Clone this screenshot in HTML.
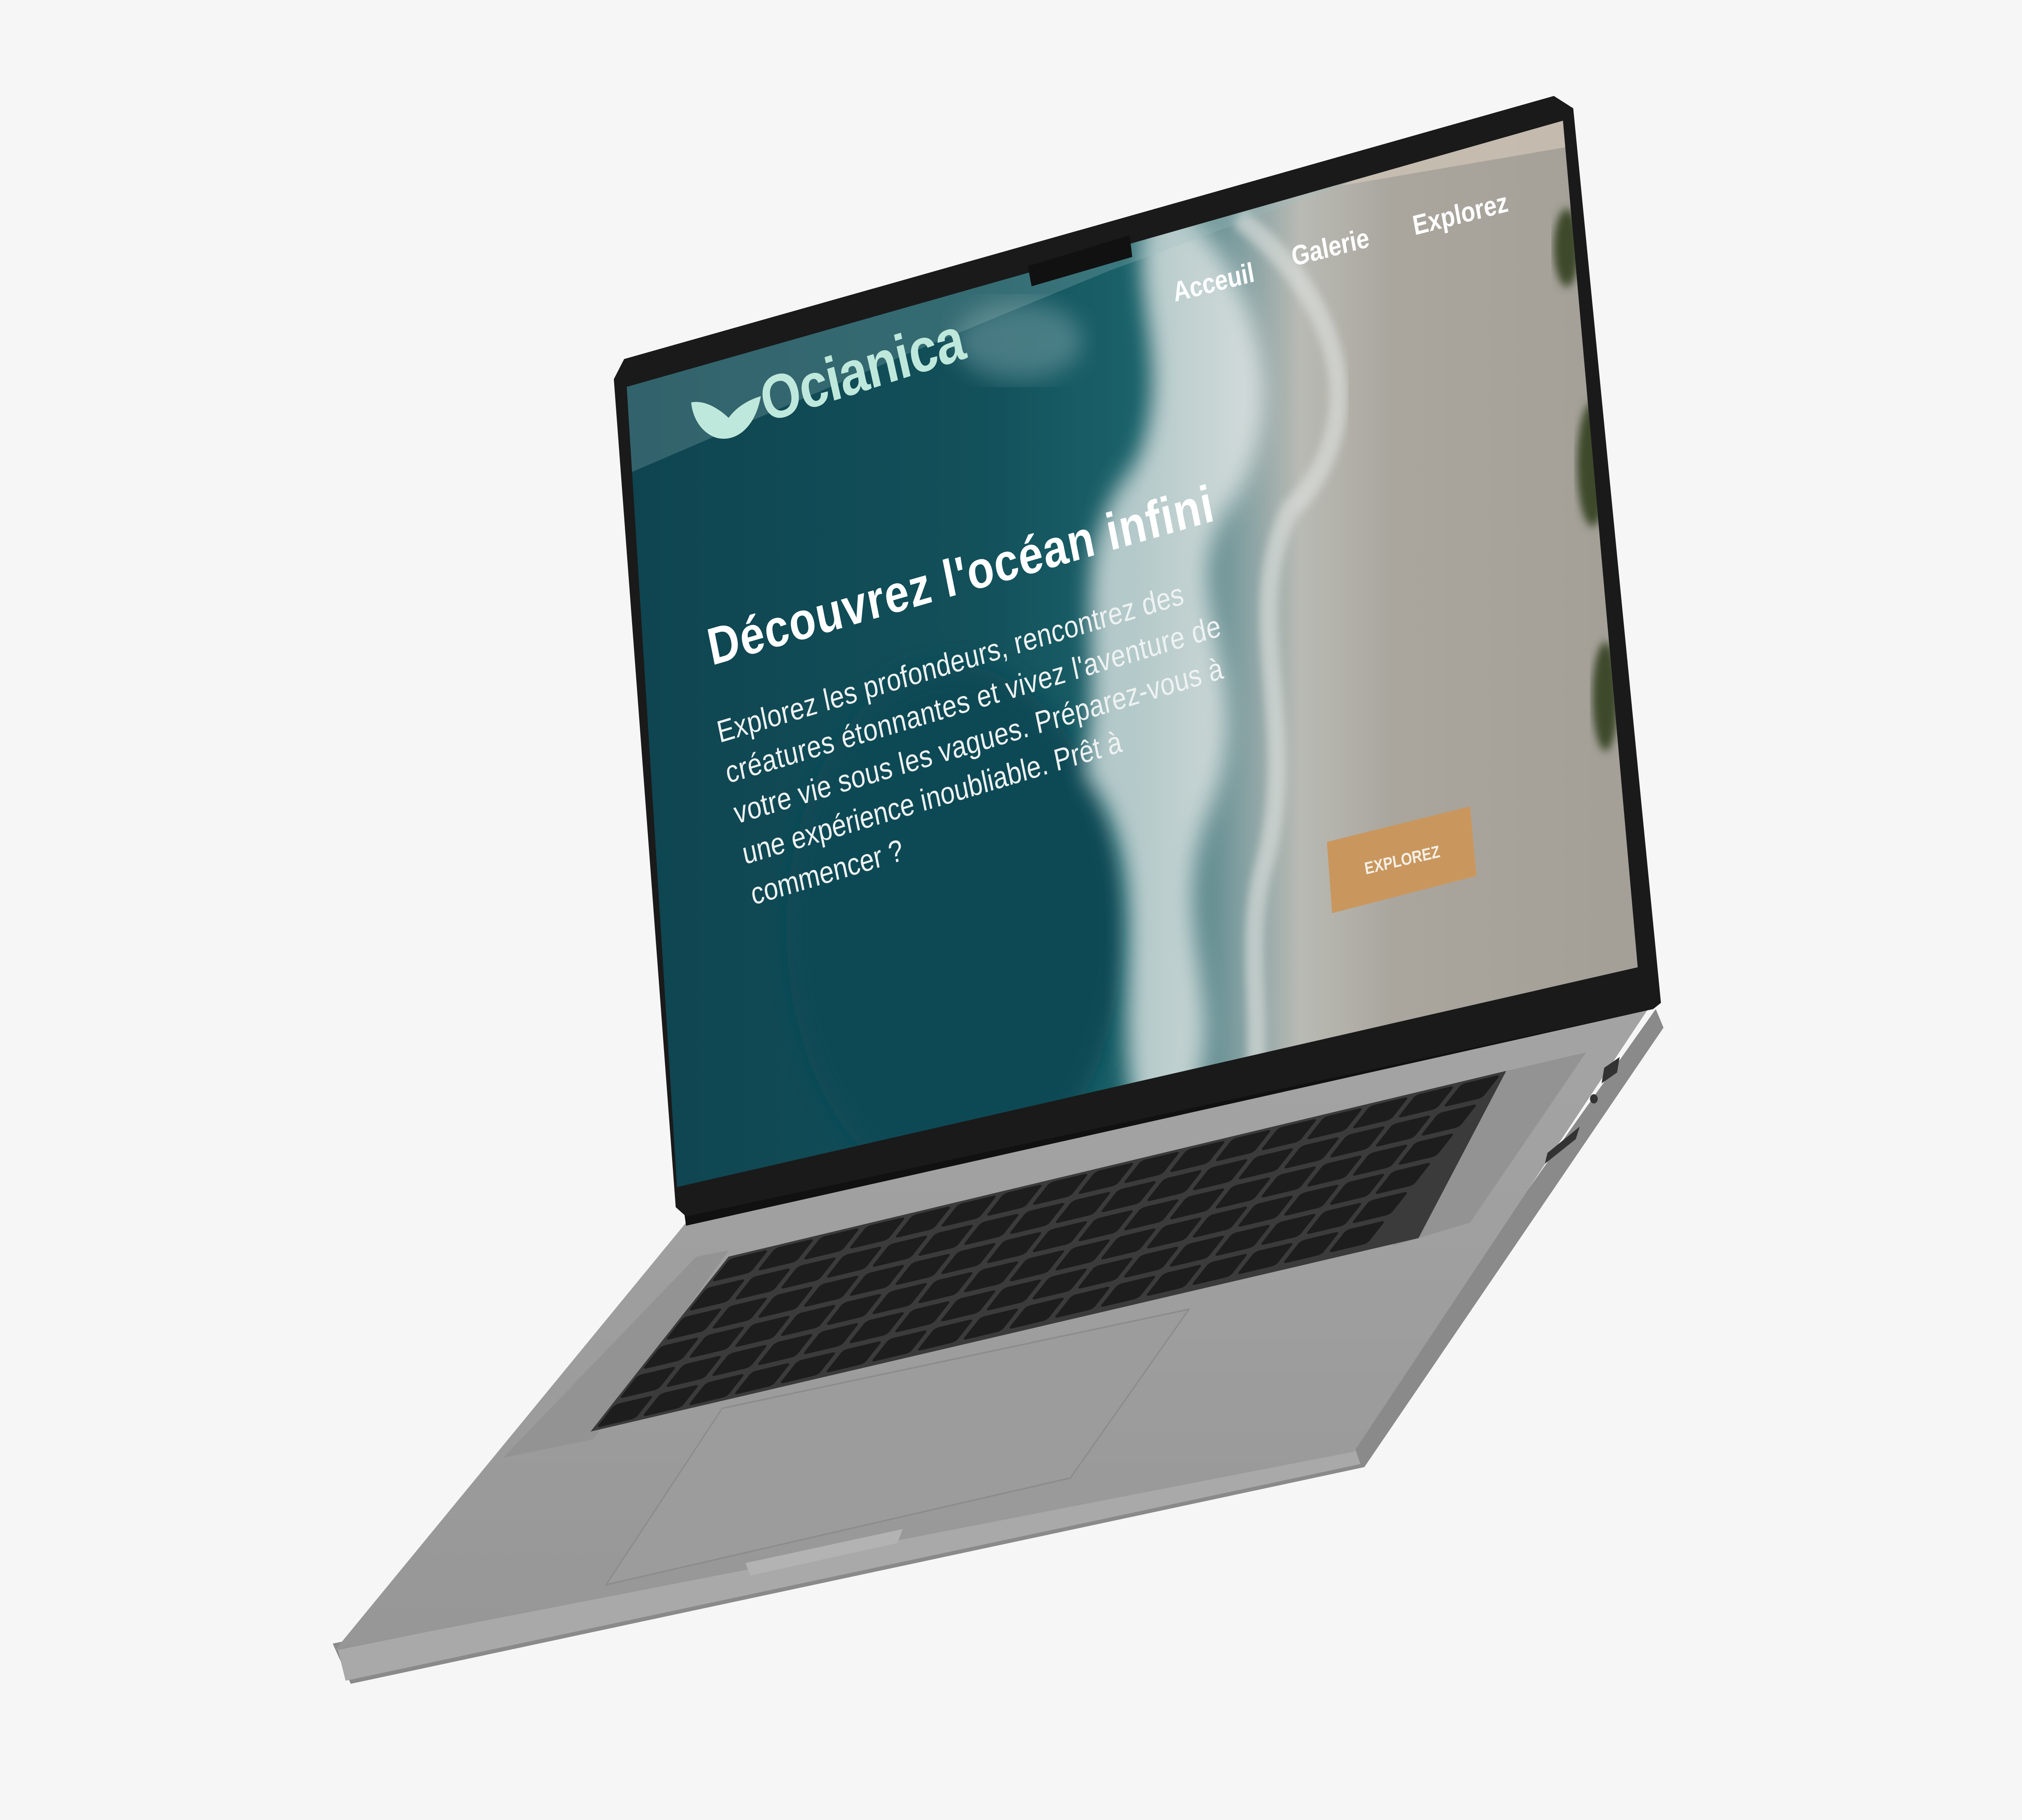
<!DOCTYPE html>
<html><head><meta charset="utf-8"><style>
html,body{margin:0;padding:0;background:#f6f6f6;width:100%;height:100%;overflow:hidden;}
svg{position:fixed;left:0;top:0;width:100vw;height:100vh;display:block}
</style></head><body>
<svg viewBox="0 0 1568 1176" preserveAspectRatio="none" xmlns="http://www.w3.org/2000/svg" font-family="Liberation Sans, sans-serif">
<defs>
<linearGradient id="scr" x1="480" y1="0" x2="1280" y2="0" gradientUnits="userSpaceOnUse">
<stop offset="0" stop-color="#0e4450"/>
<stop offset="0.35" stop-color="#12505a"/>
<stop offset="0.5" stop-color="#1b626a"/>
<stop offset="0.6" stop-color="#7f9ea0"/>
<stop offset="0.66" stop-color="#b9bab4"/>
<stop offset="0.75" stop-color="#aaa69e"/>
<stop offset="1" stop-color="#a39f97"/>
</linearGradient>
<clipPath id="disp"><polygon points="486,250 1212,78 1270,625 525,767"/></clipPath>
<filter id="b8"><feGaussianBlur stdDeviation="8"/></filter>
<filter id="b3"><feGaussianBlur stdDeviation="3"/></filter>
<pattern id="keys" width="1" height="1" patternUnits="userSpaceOnUse">
<rect width="1" height="1" fill="#3b3b3b"/>
<rect x="0.07" y="0.1" width="0.86" height="0.8" rx="0.1" fill="#1d1d1d"/>
</pattern>
<linearGradient id="deck" x1="0" y1="700" x2="0" y2="1080" gradientUnits="userSpaceOnUse">
<stop offset="0" stop-color="#a3a3a3"/><stop offset="1" stop-color="#969696"/>
</linearGradient>
</defs>
<rect width="1568" height="1176" fill="#f6f6f6"/>

<polygon points="258,1062 1048,930 1284,652 1290,664 1058,948 272,1088" fill="#8a8a8a"/>
<polygon points="262,1066 1050,934 1055,946 268,1086" fill="#a9a9a9"/>
<polygon points="532,790 1278,652 1050,938 260,1066" fill="url(#deck)"/>
<polygon points="540,812 565,808 460,930 390,942" fill="#939393"/>
<polygon points="1168,692 1230,680 1140,790 1080,805" fill="#939393"/>
<polygon points="565,812 1168,692 1100,800 458,925" fill="#3b3b3b"/>
<g transform="matrix(35.47,-7.06,-17.83,18.83,565,812)">
<rect x="0" y="0" width="17" height="6" fill="url(#keys)"/>
</g>
<polygon points="560,910 922,846 830,955 470,1024" fill="#9c9c9c" stroke="#8c8c8c" stroke-width="1"/>
<polygon points="578,1010 700,988 696,997 582,1018" fill="#b3b3b3"/>
<polygon points="1200,745 1225,728 1222,736 1198,752" fill="#333"/>
<circle cx="1236" cy="710" r="3" fill="#333"/>
<polygon points="1244,690 1256,683 1254,693 1242,700" fill="#333"/>

<polygon points="528,768 1280,635 1282,652 532,792" fill="#111"/>
<polygon points="484,232 1205,62 1220,70 1288,648 1282,652 532,786 524,780 476,245" fill="#1a1a1a"/>

<g clip-path="url(#disp)">
<rect x="470" y="60" width="820" height="720" fill="url(#scr)"/>
<ellipse cx="740" cy="600" rx="130" ry="170" fill="#0f4a54" filter="url(#b8)"/>
<path d="M900,120 C980,180 1000,260 960,320 C900,380 980,430 940,520 C900,600 960,650 920,720 L880,720 C860,640 900,560 840,500 C860,420 820,360 880,300 C920,230 860,180 900,120Z" fill="#e8ecea" opacity="0.75" filter="url(#b8)"/>
<path d="M960,140 C1050,200 1060,280 1000,330 C960,400 1010,470 980,560 C960,620 990,680 960,740" stroke="#dfe2df" stroke-width="14" fill="none" opacity="0.6" filter="url(#b3)"/>
<ellipse cx="790" cy="220" rx="50" ry="25" fill="#7ca3a8" opacity="0.5" filter="url(#b8)"/>
<ellipse cx="1235" cy="300" rx="12" ry="40" fill="#3c4a2c" filter="url(#b3)"/>
<ellipse cx="1245" cy="450" rx="10" ry="35" fill="#3c4a2c" filter="url(#b3)"/>
<ellipse cx="1215" cy="160" rx="10" ry="25" fill="#3c4a2c" filter="url(#b3)"/>
<polygon points="480,240 1130,88 1040,120 860,175 700,230 490,305" fill="#9fbfbf" opacity="0.25"/>
<polygon points="1040,120 1130,88 1215,75 1215,95" fill="#d8ccbc" opacity="0.6"/>
</g>
<polygon points="797,172 876,152 878,166 800,185" fill="#111"/>

<path d="M536,260 C548,258 560,266 565,270 C572,262 582,258 590,256 C586,275 572,286 556,283 C544,280 537,270 536,260Z" fill="#bfe8dc"/>
<text transform="translate(594,273) rotate(-15)" font-size="40" font-weight="bold" fill="#bfe8dc" textLength="162">Ocianica</text>
<text transform="translate(911,195) rotate(-12)" font-size="18" font-weight="bold" fill="#fff">Acceuil</text>
<text transform="translate(1003,172) rotate(-12)" font-size="18" font-weight="bold" fill="#fff">Galerie</text>
<text transform="translate(1097,152) rotate(-12)" font-size="18" font-weight="bold" fill="#fff">Explorez</text>
<text transform="translate(552,430) rotate(-13.5)" font-size="34" font-weight="bold" fill="#fff" textLength="402">Découvrez l'océan infini</text>
<g transform="translate(558,480) rotate(-14)" font-size="20" fill="#eef2f2">
<text x="0" y="0" textLength="372">Explorez les profondeurs, rencontrez des</text>
<text x="0" y="27" textLength="395">créatures étonnantes et vivez l'aventure de</text>
<text x="0" y="54" textLength="390">votre vie sous les vagues. Préparez-vous à</text>
<text x="0" y="81">une expérience inoubliable. Prêt à</text>
<text x="0" y="108">commencer ?</text>
</g>
<polygon points="1029,544 1140,521 1145,566 1033,590" fill="#c9975e"/>
<text transform="translate(1059,565) rotate(-11)" font-size="11" font-weight="bold" fill="#f4efe6">EXPLOREZ</text>
</svg>
</body></html>
